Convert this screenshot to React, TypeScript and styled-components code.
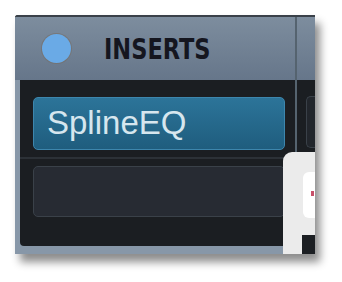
import React from "react";
import styled, { createGlobalStyle } from "styled-components";

const Global = createGlobalStyle`
  html, body { margin: 0; padding: 0; background: #ffffff; }
  body { width: 342px; height: 282px; overflow: hidden; }
`;

const Page = styled.div`
  padding: 15px 0 0 15px;
`;

const Frame = styled.div`
  position: relative;
  width: 300px;
  height: 239px;
  display: flex;
  flex-direction: column;
  background: #1b1e22;
  box-shadow: 5px 8px 8px rgba(0, 0, 0, 0.45);
  overflow: hidden;
  border-top-left-radius: 3px;
`;

const Header = styled.div`
  height: 63px;
  display: grid;
  grid-template-columns: 280px 2px 1fr;
  border-top: 2px solid #3a4149;
  background: linear-gradient(#7d8d9e, #66768a);
`;

const HeaderCell = styled.div`
  display: flex;
  align-items: center;
`;

const Divider = styled.div`
  background: #55636f;
`;

const Led = styled.div`
  width: 29px;
  height: 29px;
  border-radius: 50%;
  background: #6aaae6;
  box-shadow: 0 0 0 1px rgba(120, 110, 100, 0.6);
  margin: 0 33px 0 27px;
  flex: none;
`;

const Title = styled.span`
  display: inline-block;
  font-family: "DejaVu Sans Condensed", "DejaVu Sans", sans-serif;
  font-weight: bold;
  font-size: 25px;
  color: #15161f;
  letter-spacing: 0px;
  margin-top: 1px;
  transform: scaleY(1.12);
`;

const Body = styled.div`
  flex: 1;
  display: grid;
  grid-template-columns: 280px 2px 1fr;
`;

const Column = styled.div`
  background: #8797a8;
  padding: 0 0 8px 5px;
  display: flex;
`;

const ColumnInner = styled.div`
  flex: 1;
  background: #1b1e22;
  border-bottom-left-radius: 4px;
  padding: 17px 10px 0 13px;
  display: flex;
  flex-direction: column;
`;

const Slot = styled.div<{ $active?: boolean; $h: number }>`
  height: ${(p) => p.$h}px;
  box-sizing: border-box;
  border-radius: 5px;
  border: 1px solid ${(p) => (p.$active ? "#3d86ad" : "#3a4149")};
  background: ${(p) =>
    p.$active ? "linear-gradient(#2c7499, #1f5d7e)" : "#272b33"};
  display: flex;
  align-items: center;
  padding-left: 13px;
`;

const SlotName = styled.span`
  font-family: "Liberation Sans", Arial, sans-serif;
  font-size: 33px;
  color: #d6e6ee;
  margin-top: -1px;
`;

const Separator = styled.div`
  height: 2px;
  background: #2c3137;
  margin: 7px -10px 7px -13px;
`;

const SideColumn = styled.div`
  background: #1b1e22;
  padding: 16px 0 0 9px;
`;

const SideSlot = styled.div`
  height: 52px;
  box-sizing: border-box;
  border: 1px solid #3a4149;
  border-right: none;
  border-radius: 5px 0 0 5px;
  background: #22262c;
`;

const Overlay = styled.div`
  position: absolute;
  left: 268px;
  top: 137px;
  right: 0;
  bottom: 0;
  background: #ebebeb;
  border-top-left-radius: 9px;
`;

const OverlayInner = styled.div`
  position: absolute;
  left: 20px;
  top: 20px;
  right: 0;
  height: 46px;
  background: #ffffff;
  border-radius: 6px 0 0 6px;
`;

const Mark = styled.div`
  position: absolute;
  left: 8px;
  top: 19px;
  width: 3px;
  height: 5px;
  background: #c8506a;
`;

const OverlayBlock = styled.div`
  position: absolute;
  left: 19px;
  bottom: 0;
  right: 0;
  height: 19px;
  background: #1c1f23;
`;

export default function App() {
  return (
    <>
      <Global />
      <Page>
        <Frame>
          <Header>
            <HeaderCell>
              <Led />
              <Title>INSERTS</Title>
            </HeaderCell>
            <Divider />
            <HeaderCell />
          </Header>
          <Body>
            <Column>
              <ColumnInner>
                <Slot $active $h={53}>
                  <SlotName>SplineEQ</SlotName>
                </Slot>
                <Separator />
                <Slot $h={51} />
              </ColumnInner>
            </Column>
            <Divider />
            <SideColumn>
              <SideSlot />
            </SideColumn>
          </Body>
          <Overlay>
            <OverlayInner>
              <Mark />
            </OverlayInner>
            <OverlayBlock />
          </Overlay>
        </Frame>
      </Page>
    </>
  );
}
